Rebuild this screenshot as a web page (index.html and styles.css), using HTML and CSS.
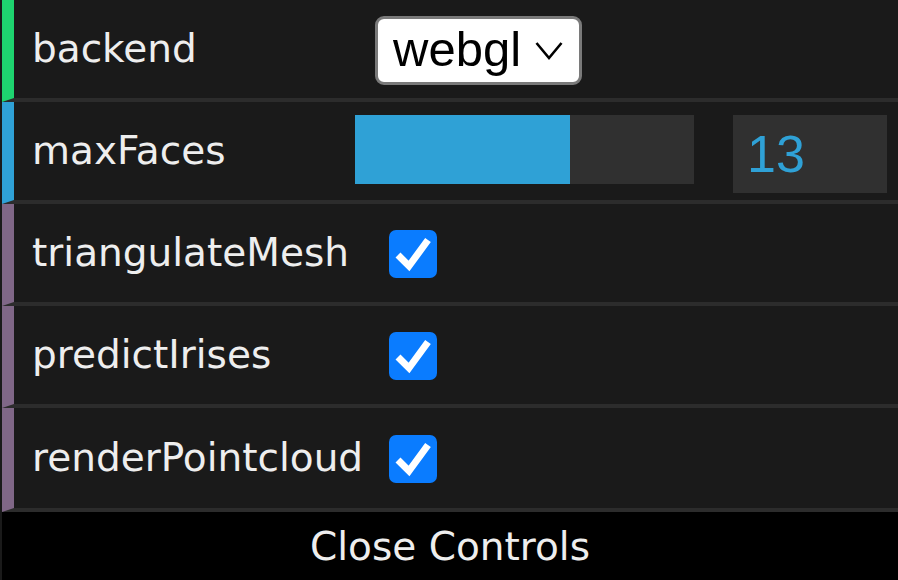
FILE: index.html
```html
<!DOCTYPE html>
<html>
<head>
<meta charset="utf-8">
<link rel="stylesheet" href="styles.css">
</head>
<body>
<div class="panel">
  <ul class="rows">
    <li class="row row-string">
      <span class="name">backend</span>
      <div class="ctrl">
        <div class="select">
          <span class="select-text">webgl</span>
          <svg class="chev" width="28" height="20" viewBox="0 0 28 20"><polyline points="1.5,2 14,17 26.5,2" fill="none" stroke="#000" stroke-width="2.6"/></svg>
        </div>
      </div>
    </li>
    <li class="row row-number">
      <span class="name">maxFaces</span>
      <div class="ctrl ctrl-number">
        <div class="slider"><div class="slider-fg" style="width:63.4%"></div></div>
        <div class="numbox">13</div>
      </div>
    </li>
    <li class="row row-bool">
      <span class="name">triangulateMesh</span>
      <div class="ctrl">
        <span class="check"><svg width="48" height="48" viewBox="0 0 48 48"><polyline points="9,25 20,36 39,10" fill="none" stroke="#fff" stroke-width="7"/></svg></span>
      </div>
    </li>
    <li class="row row-bool">
      <span class="name">predictIrises</span>
      <div class="ctrl">
        <span class="check"><svg width="48" height="48" viewBox="0 0 48 48"><polyline points="9,25 20,36 39,10" fill="none" stroke="#fff" stroke-width="7"/></svg></span>
      </div>
    </li>
    <li class="row row-bool row-last">
      <span class="name">renderPointcloud</span>
      <div class="ctrl">
        <span class="check"><svg width="48" height="48" viewBox="0 0 48 48"><polyline points="9,25 20,36 39,10" fill="none" stroke="#fff" stroke-width="7"/></svg></span>
      </div>
    </li>
  </ul>
  <div class="close">Close Controls</div>
</div>
</body>
</html>
```

FILE: styles.css
```css
html, body {
  margin: 0;
  padding: 0;
  background: #1a1a1a;
  width: 898px;
  height: 580px;
  overflow: hidden;
}
.panel {
  margin-left: 2px;
  width: 896px;
  background: #1a1a1a;
  font-family: "DejaVu Sans", "Lucida Grande", sans-serif;
  color: #eee;
}
.rows {
  list-style: none;
  margin: 0;
  padding: 0;
}
.row {
  display: flex;
  align-items: center;
  height: 98px;
  border-left: 12px solid #1ed36f;
  border-bottom: 4px solid #2c2c2c;
  background: #1a1a1a;
  box-sizing: content-box;
}
.row-last { height: 100px; }
.row-number { border-left-color: #2fa1d6; }
.row-bool { border-left-color: #806787; }
.row-string { border-left-color: #1ed36f; }
.name {
  width: 323px;
  padding-left: 18px;
  font-size: 39px;
  line-height: 98px;
  white-space: nowrap;
  flex: none;
}
.ctrl {
  flex: 1;
  display: flex;
  align-items: center;
  height: 100%;
}
.select {
  margin-left: 20px;
  width: 201px;
  height: 63px;
  margin-top: 2px;
  background: #fff;
  border: 3px solid #7a7a7a;
  border-radius: 9px;
  display: flex;
  align-items: center;
  box-sizing: content-box;
  font-family: "Liberation Sans", Arial, sans-serif;
  color: #000;
  font-size: 49px;
}
.select-text {
  padding-left: 15px;
  line-height: 63px;
  position: relative;
  top: -1px;
}
.chev {
  margin-left: 14px;
  margin-top: 2px;
}
.ctrl-number {
  align-items: flex-start;
}
.slider {
  margin-top: 13px;
  width: 339px;
  height: 69px;
  background: #303030;
}
.slider-fg {
  height: 100%;
  background: #2fa1d6;
}
.numbox {
  margin-top: 13px;
  margin-left: 39px;
  width: 154px;
  height: 78px;
  background: #303030;
  color: #2fa1d6;
  font-family: "Liberation Sans", Arial, sans-serif;
  font-size: 52px;
  line-height: 78px;
  padding-left: 14px;
  box-sizing: border-box;
}
.check {
  margin-left: 34px;
  width: 48px;
  height: 48px;
  border-radius: 7px;
  background: #0a7cff;
  display: block;
  margin-top: 2px;
}
.check svg { display: block; }
.close {
  height: 68px;
  background: #000;
  color: #eee;
  text-align: center;
  font-size: 39px;
  line-height: 70px;
}
```
